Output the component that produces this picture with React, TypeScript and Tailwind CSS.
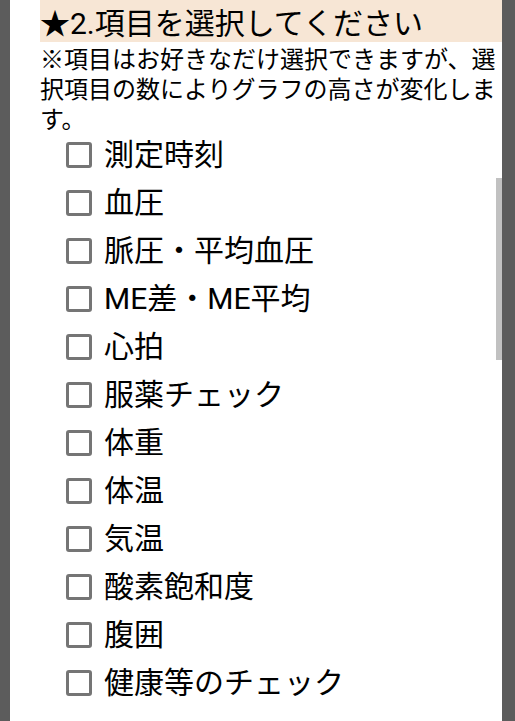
import React from "react";

const items = [
  "測定時刻",
  "血圧",
  "脈圧・平均血圧",
  "ME差・ME平均",
  "心拍",
  "服薬チェック",
  "体重",
  "体温",
  "気温",
  "酸素飽和度",
  "腹囲",
  "健康等のチェック",
];

export default function App() {
  return (
    <div
      className="relative h-[721px] w-[515px] overflow-hidden bg-[#5c5c5c]"
      style={{ fontFamily: "Roboto, 'Noto Sans CJK JP', sans-serif" }}
    >
      <div className="ml-[10px] h-full w-[492px] bg-white pl-[30px] text-black">
        <div className="box-border h-[42px] bg-[#f7e6d5] pt-[4px] text-[30px] leading-[40px]">
          ★2.項目を選択してください
        </div>
        <p className="mt-[3px] pr-[4px] text-[24px] leading-[30px]">
          ※項目はお好きなだけ選択できますが、選択項目の数によりグラフの高さが変化します。
        </p>
        <ul className="mt-[-4px] pl-[26px]">
          {items.map((t) => (
            <li key={t} className="flex h-[48px] items-center gap-[12px]">
              <span className="box-border h-[26px] w-[26px] shrink-0 rounded-[3px] border-[3px] border-[#757575] bg-white" />
              <span className="text-[30px] leading-[48px]">{t}</span>
            </li>
          ))}
        </ul>
      </div>
      <div className="absolute left-[496px] top-[178px] h-[182px] w-[6px] bg-[#c1c1c1]" />
    </div>
  );
}
